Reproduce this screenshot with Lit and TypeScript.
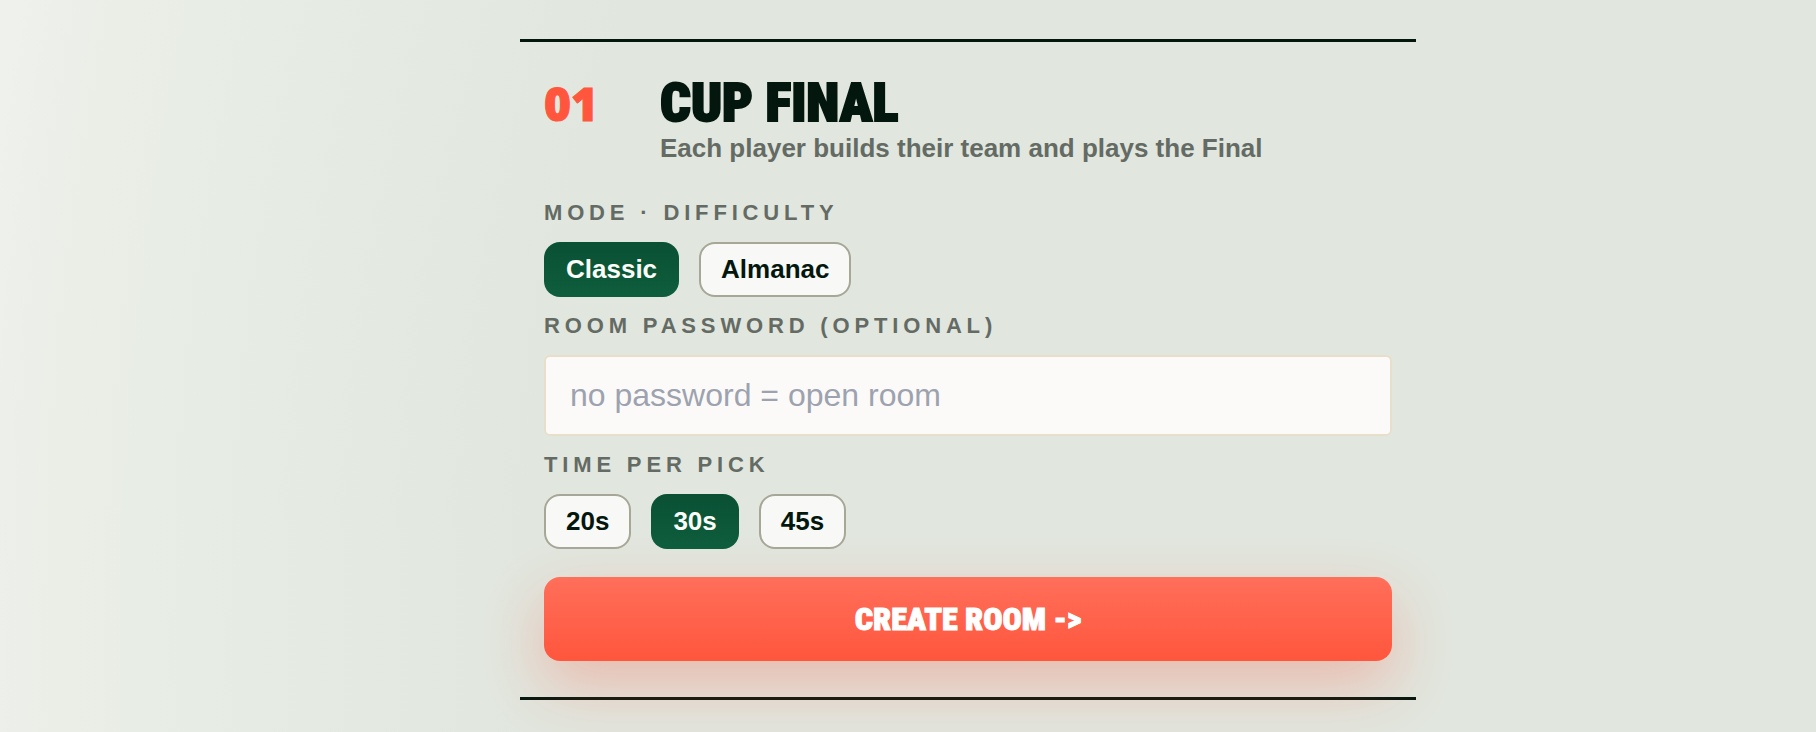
import { LitElement, html, css } from "lit";
import { customElement, state } from "lit/decorators.js";

@customElement("app-root")
export class AppRoot extends LitElement {
  @state() private mode = "Classic";
  @state() private time = "30s";

  static styles = css`
    :host {
      display: block;
      min-height: 100vh;
      box-sizing: border-box;
      padding: 39px 0 32px 120px;
      overflow: hidden;
      font-family: "Liberation Sans", Arial, sans-serif;
      color: #04170e;
      background: radial-gradient(ellipse 77% 300% at 77% 89%, #e1e6de 62%, #e5ebe3 78%, #e8ede5 90%, #ebeee7 96%, #eef1ec 103%);
    }
    *, *::before, *::after { box-sizing: border-box; }
    .card {
      max-width: 896px;
      margin: 0 auto;
      padding: 36px 24px;
      border-top: 3px solid #04170e;
      border-bottom: 3px solid #04170e;
    }
    .head {
      display: grid;
      grid-template-columns: 80px 1fr;
      column-gap: 36px;
      align-items: baseline;
      margin-bottom: 28px;
    }
    .number {
      font: 800 46px/50px "Arial Black", "Open Sans", sans-serif;
      -webkit-text-stroke: 1px currentColor;
      color: #ff563d;
    }
    .title {
      margin: 0;
      font: 900 54px/50px Impact, "Roboto Condensed", "Liberation Sans Narrow", sans-serif;
      -webkit-text-stroke: 2px currentColor;
      text-transform: uppercase;
    }
    .sub {
      margin: 0;
      font-size: 26px;
      line-height: 40px;
      font-weight: 700;
      color: #646b64;
    }
    .group { margin: 0 0 12px; padding: 0; border: 0; min-width: 0; }
    .group.last { margin-bottom: 28px; }
    .label {
      display: block;
      padding: 0;
      margin-bottom: 12px;
      font-size: 22px;
      line-height: 34px;
      font-weight: 700;
      letter-spacing: 0.22em;
      text-transform: uppercase;
      color: #646b64;
    }
    .chips { display: flex; flex-wrap: wrap; gap: 20px; }
    .chip {
      height: 55px;
      padding: 0 20px 2px;
      border: 2px solid #a7a798;
      border-radius: 16px;
      background: #f8f9f6;
      color: #04170e;
      font: 700 26px/40px "Liberation Sans", Arial, sans-serif;
      cursor: pointer;
    }
    .chip.on {
      border-color: transparent;
      background: linear-gradient(#0a5034, #0e5e3d) border-box;
      color: #fbfdf8;
    }
    .input {
      display: block;
      width: 100%;
      height: 81px;
      padding: 0 24px;
      border: 2px solid #e8dfcb;
      border-radius: 6px;
      background: #fcfaf9;
      color: #04170e;
      font: 400 32px/48px "Liberation Sans", Arial, sans-serif;
    }
    .input::placeholder { color: #9ca3af; opacity: 1; }
    .submit {
      display: block;
      width: 100%;
      height: 84px;
      border: 0;
      border-radius: 16px;
      background: linear-gradient(#ff6f5a, #ff563d);
      box-shadow: 0 24px 60px rgba(255, 86, 61, 0.3);
      color: #fff;
      font: 900 32px/48px Impact, "Roboto Condensed", "Liberation Sans Narrow", sans-serif;
      -webkit-text-stroke: 1px currentColor;
      text-transform: uppercase;
      cursor: pointer;
    }
  `;

  private chips(options: string[], current: string, pick: (value: string) => void) {
    return html`<div class="chips">
      ${options.map(
        (o) => html`<button
          type="button"
          class="chip ${o === current ? "on" : ""}"
          aria-pressed=${o === current ? "true" : "false"}
          @click=${() => pick(o)}
        >${o}</button>`
      )}
    </div>`;
  }

  render() {
    return html`
      <form class="card" @submit=${(e: Event) => e.preventDefault()}>
        <header class="head">
          <span class="number">01</span>
          <div>
            <h2 class="title">Cup Final</h2>
            <p class="sub">Each player builds their team and plays the Final</p>
          </div>
        </header>
        <div class="group" role="group" aria-labelledby="mode">
          <span class="label" id="mode">Mode · Difficulty</span>
          ${this.chips(["Classic", "Almanac"], this.mode, (v) => (this.mode = v))}
        </div>
        <div class="group">
          <label class="label" for="password">Room password (optional)</label>
          <input class="input" id="password" type="text" placeholder="no password = open room" />
        </div>
        <div class="group last" role="group" aria-labelledby="time">
          <span class="label" id="time">Time per pick</span>
          ${this.chips(["20s", "30s", "45s"], this.time, (v) => (this.time = v))}
        </div>
        <button class="submit" type="submit">Create room -&gt;</button>
      </form>
    `;
  }
}
